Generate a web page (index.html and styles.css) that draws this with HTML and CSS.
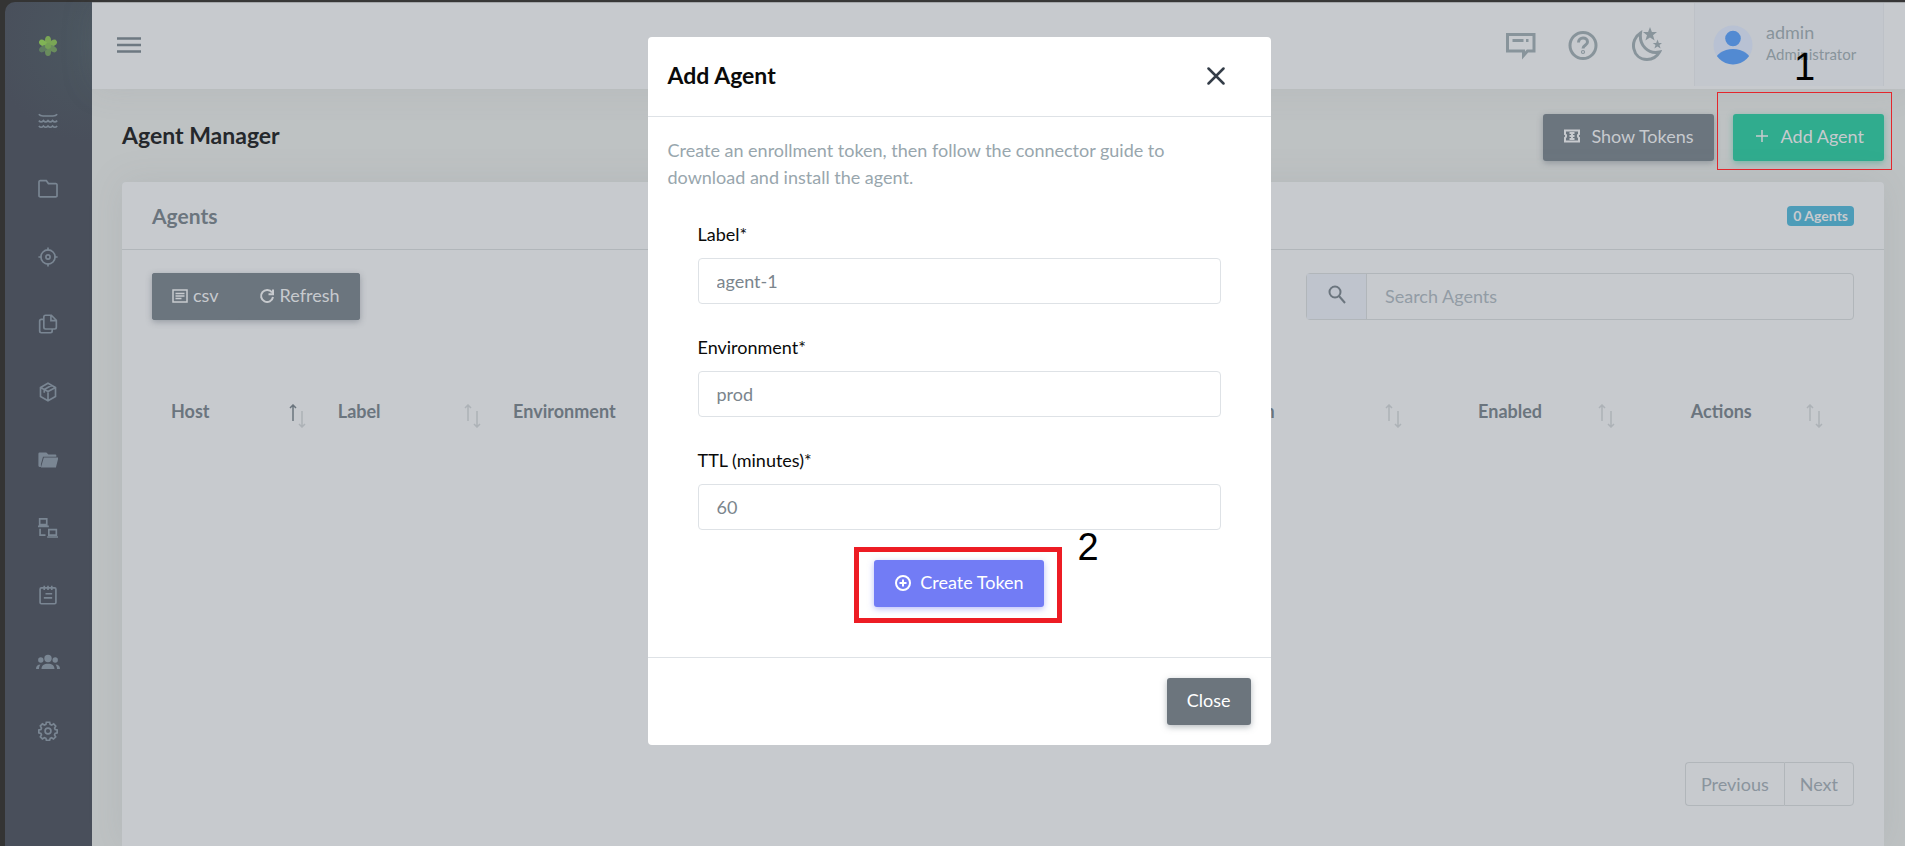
FILE: index.html
```html
<!DOCTYPE html>
<html lang="en">
<head>
<meta charset="utf-8">
<title>Agent Manager</title>
<link rel="stylesheet" href="styles.css">
</head>
<body>
<div class="app">
  <aside class="sidebar">
    <a class="logo" href="#" aria-label="Home">
      <svg width="20" height="20" viewBox="0 0 20 20"><g fill="#7aa655"><ellipse cx="10" cy="4.500" rx="3" ry="4.500"/><ellipse cx="10" cy="4.500" rx="3" ry="4.500" transform="rotate(60 10 10)"/><ellipse cx="10" cy="4.500" rx="3" ry="4.500" transform="rotate(-60 10 10)" fill="#80b455"/></g><g fill="#6a8d5d"><ellipse cx="10" cy="4.500" rx="3" ry="4.500" transform="rotate(120 10 10)"/><ellipse cx="10" cy="4.500" rx="3" ry="4.500" transform="rotate(180 10 10)"/><ellipse cx="10" cy="4.500" rx="3" ry="4.500" transform="rotate(240 10 10)" fill="#5f7c61"/></g><circle cx="10" cy="10" r="3" fill="#74a057"/></svg>
    </a>
    <nav class="side-nav">
      <a href="#" aria-label="Streams"><svg viewBox="0 0 24 24" class="line"><path d="M1 4c1.500 2 3 2 5 2h12c2 0 3.500 0 5-2M1 11.500c1.800 2 3.700 2 5.500 0 1.800 2 3.700 2 5.500 0 1.800 2 3.700 2 5.500 0 1.800 2 3.700 2 5.500 0M1 18c1.800 2 3.700 2 5.500 0 1.800 2 3.700 2 5.500 0 1.800 2 3.700 2 5.500 0 1.800 2 3.700 2 5.500 0"/></svg></a>
      <a href="#" aria-label="Folders"><svg viewBox="0 0 24 24" class="line"><path d="M3 2h7l2.500 3.500H21A1.500 1.500 0 0 1 22.800 7v13a1.500 1.500 0 0 1-1.800 1.500H3A1.500 1.500 0 0 1 1.200 20V3.500A1.500 1.500 0 0 1 3 2z"/></svg></a>
      <a href="#" aria-label="Targets"><svg viewBox="0 0 24 24" class="line"><circle cx="12" cy="12" r="8.500"/><circle cx="12" cy="12" r="2.500"/><path d="M12 .5v4M12 19.500v4M.5 12h4M19.500 12h4"/></svg></a>
      <a href="#" aria-label="Documents"><svg viewBox="0 0 24 24" class="line"><path d="M9 1.500h7l6 6V16a2 2 0 0 1-2 2H9a2 2 0 0 1-2-2V3.500a2 2 0 0 1 2-2zM15.500 2v6H22M7 6.500H4a2 2 0 0 0-2 2v12a2 2 0 0 0 2 2h11a2 2 0 0 0 2-2V18"/></svg></a>
      <a href="#" aria-label="Packages"><svg viewBox="0 0 24 24" class="line"><path d="M12 1.500l9 5v11l-9 5-9-5v-11zM3 6.500l9 5 9-5M12 11.500v11M7.500 9V13M7.500 9l9-5"/></svg></a>
      <a href="#" aria-label="Files"><svg viewBox="0 0 24 24" class="solid"><path d="M2 3h8l2.500 2.500H21a1 1 0 0 1 1 1V8H6L3.500 17V20.500H1.800A1.500 1.500 0 0 1 .5 19V4.500A1.500 1.500 0 0 1 2 3zM7 9h17.500l-3 12H3.500z"/></svg></a>
      <a href="#" aria-label="Agents"><svg viewBox="0 0 24 24" class="line"><path d="M2 1h8.500v7H2zM0 10h13M13 14h9v6.500h-9zM11 22.800h13M2.500 13v7.500H9"/></svg></a>
      <a href="#" aria-label="Tasks"><svg viewBox="0 0 24 24" class="line"><path d="M4 3.500h16a1.500 1.500 0 0 1 1.500 1.500v16a1.500 1.500 0 0 1-1.500 1.500H4A1.500 1.500 0 0 1 2.500 21V5A1.500 1.500 0 0 1 4 3.500zM7.500 1v5M12 1v5M16.500 1v5M9 10.500h8M7 15.500h10"/></svg></a>
      <a href="#" aria-label="Users"><svg viewBox="0 0 24 24" class="solid wide"><circle cx="12" cy="7.500" r="3.700"/><circle cx="4.800" cy="9" r="2.700"/><circle cx="19.200" cy="9" r="2.700"/><path d="M5.500 18c0-3.500 2.500-5.200 6.500-5.200s6.500 1.700 6.500 5.200zM0 18c0-2.800 1.500-4.500 4.500-4.500-1 1.300-1.500 2.700-1.500 4.500zM24 18c0-2.800-1.500-4.500-4.500-4.500 1 1.300 1.500 2.700 1.500 4.500z"/></svg></a>
      <a href="#" aria-label="Settings"><svg viewBox="0 0 24 24" class="line"><circle cx="12" cy="12" r="3.500"/><path d="M10 1.500h4l.6 2.700 1.800.8 2.400-1.500 2.500 2.600-1.400 2.400.7 1.700 2.400.6v3.400l-2.500.7-.7 1.800 1.400 2.300-2.600 2.600-2.300-1.500-1.700.8-.7 2.400h-3.800l-.6-2.500-1.800-.7-2.400 1.400-2.500-2.500 1.400-2.400-.7-1.700-2.500-.7v-3.400l2.500-.6.7-1.800-1.400-2.400 2.500-2.500 2.400 1.400 1.800-.7z"/></svg></a>
    </nav>
  </aside>

  <div class="page">
    <header class="topbar">
      <button class="icon-btn" aria-label="Toggle menu"><svg width="24" height="16" viewBox="0 0 24 16"><path d="M0 1.500h24M0 8h24M0 14.500h24" stroke="#6d7881" stroke-width="2.500"/></svg></button>
      <div class="top-actions">
        <button class="icon-btn" aria-label="Messages"><svg width="30" height="30" viewBox="0 0 30 30" class="tool"><path d="M1.500 4.500h26.500v16.500H21.500L17.500 25.500v-4.500h-16z"/><path d="M6.500 10.500h11M20 10.500h2.500"/></svg></button>
        <button class="icon-btn" aria-label="Help"><svg width="30" height="30" viewBox="0 0 30 30" class="tool"><circle cx="15" cy="15.500" r="13"/><path d="M10.500 12.500c0-6 9-6 9-.5 0 3.500-4.500 3-4.500 6.500"/><circle cx="15" cy="22" r=".6"/></svg></button>
        <button class="icon-btn" aria-label="Dark mode"><svg width="32" height="36" viewBox="0 0 32 36" class="tool"><path d="M10.500 6C-1 13 2 32 17 32.500c6 0 10-3 12.500-7.500C18 27.500 9 18 10.500 6z"/><path class="star" d="M20 0l1.900 5h5.100L23 8.300l1.600 5.200L20 10.500l-4.600 3 1.600-5.200-4-3.300h5.100zM27.500 12.500l1.300 3.400h3.200l-2.500 2.200 1.100 3.400-3.100-2-3.100 2 1.100-3.400-2.800-2.200h3.500z"/></svg></button>
        <a class="user" href="#">
          <svg width="40" height="40" viewBox="0 0 40 40"><defs><clipPath id="av"><circle cx="20" cy="20" r="19.500"/></clipPath></defs><circle cx="20" cy="20" r="19.500" fill="#b8c1d3"/><g clip-path="url(#av)" fill="#528ad2"><circle cx="20" cy="13.500" r="7.800"/><ellipse cx="20" cy="37" rx="18" ry="13"/></g></svg>
          <span class="user-text"><span class="user-name">admin</span><span class="user-role">Administrator</span></span>
        </a>
      </div>
    </header>

    <main class="content">
      <div class="page-head">
        <h1>Agent Manager</h1>
        <div class="head-buttons">
          <button class="btn grey"><svg width="18" height="18" viewBox="0 0 18 18" class="glyph"><path d="M2 3.500h14v3.700a2 2 0 0 0 0 3.600v3.700H2v-3.700a2 2 0 0 0 0-3.600z"/><path d="M6.500 6h5M6.500 9h5M6.500 12h5M9 5v8"/></svg>Show Tokens</button>
          <button class="btn green"><svg width="18" height="18" viewBox="0 0 18 18" class="glyph thin"><path d="M9 3v12M3 9h12"/></svg>Add Agent</button>
        </div>
      </div>

      <section class="card">
        <div class="card-head"><h2>Agents</h2><span class="badge">0 Agents</span></div>
        <div class="card-body">
          <div class="tools">
            <div class="btn-group">
              <button class="btn grey"><svg width="16" height="16" viewBox="0 0 16 16" class="glyph thin"><path d="M1 2h14v12H1zM3.500 5.500h9M3.500 8h9M3.500 10.500h6"/></svg>csv</button>
              <button class="btn grey"><svg width="16" height="16" viewBox="0 0 16 16" class="glyph"><path d="M13 4.500A6 6 0 1 0 14 9M14 1.500v4.700H9.500"/></svg>Refresh</button>
            </div>
            <div class="search">
              <label for="search" aria-label="Search"><svg width="18" height="20" viewBox="0 0 18 20"><circle cx="7" cy="7" r="5.500"/><path d="M11 11l6 7"/></svg></label>
              <input id="search" type="search" placeholder="Search Agents">
            </div>
          </div>
          <table>
            <colgroup><col class="c1"><col class="c2"><col class="c3"><col class="c4"><col class="c5"><col class="c6"></colgroup>
            <thead><tr>
              <th><span class="th">Host<svg class="sort asc" width="18" height="24" viewBox="0 0 18 24"><path d="M4 17V1M1 4l3-3 3 3"/><path d="M13 7v16M10 20l3 3 3-3"/></svg></span></th>
              <th><span class="th">Label<svg class="sort" width="18" height="24" viewBox="0 0 18 24"><path d="M4 17V1M1 4l3-3 3 3"/><path d="M13 7v16M10 20l3 3 3-3"/></svg></span></th>
              <th><span class="th">Environment</span></th>
              <th class="roomy"><span class="th">Version<svg class="sort" width="18" height="24" viewBox="0 0 18 24"><path d="M4 17V1M1 4l3-3 3 3"/><path d="M13 7v16M10 20l3 3 3-3"/></svg></span></th>
              <th class="roomy"><span class="th">Enabled<svg class="sort" width="18" height="24" viewBox="0 0 18 24"><path d="M4 17V1M1 4l3-3 3 3"/><path d="M13 7v16M10 20l3 3 3-3"/></svg></span></th>
              <th class="last"><span class="th">Actions<svg class="sort" width="18" height="24" viewBox="0 0 18 24"><path d="M4 17V1M1 4l3-3 3 3"/><path d="M13 7v16M10 20l3 3 3-3"/></svg></span></th>
            </tr></thead>
          </table>
          <div class="pager"><button>Previous</button><button>Next</button></div>
        </div>
      </section>
    </main>
  </div>
</div>

<div class="mark mark-add"><span>1</span></div>

<div class="modal" role="dialog" aria-labelledby="dlg-title">
  <div class="modal-head">
    <h2 id="dlg-title">Add Agent</h2>
    <button class="icon-btn" aria-label="Close dialog"><svg width="18" height="18" viewBox="0 0 18 18"><path d="M1.500 1.500l15 15M16.500 1.500l-15 15" stroke="#343d48" stroke-width="2.500" stroke-linecap="round"/></svg></button>
  </div>
  <div class="modal-body">
    <p>Create an enrollment token, then follow the connector guide to download and install the agent.</p>
    <form class="form">
      <div class="field"><label for="f-label">Label*</label><input id="f-label" type="text" placeholder="agent-1"></div>
      <div class="field"><label for="f-env">Environment*</label><input id="f-env" type="text" placeholder="prod"></div>
      <div class="field"><label for="f-ttl">TTL (minutes)*</label><input id="f-ttl" type="text" placeholder="60"></div>
      <div class="submit">
        <button class="btn violet" type="button"><svg width="18" height="18" viewBox="0 0 18 18" class="glyph"><circle cx="9" cy="9" r="7"/><path d="M9 5.500v7M5.500 9h7"/></svg>Create Token</button>
        <div class="mark mark-create"><span>2</span></div>
      </div>
    </form>
  </div>
  <div class="modal-foot"><button class="btn slate">Close</button></div>
</div>
</body>
</html>
```

FILE: styles.css
```css
* { box-sizing: border-box; }
body {
  margin: 0;
  height: 100vh;
  overflow: hidden;
  background: #343434;
  font-family: Lato, "Open Sans", sans-serif;
  font-size: 18px;
  line-height: 27px;
  color: #6b757e;
}
button, input { font: inherit; color: inherit; }
button { border: 0; background: none; padding: 0; }
h1, h2, p { margin: 0; }
svg { display: block; fill: none; flex: none; }
a { color: inherit; text-decoration: none; }

.app {
  display: flex;
  height: 100vh;
  padding: 2px 0 0 5px;
}
.sidebar {
  width: 87px;
  padding-right: 1px;
  background: radial-gradient(circle at 100% 40px, #4b5760, #494f5b 100px);
  border-top-left-radius: 10px;
  display: flex;
  flex-direction: column;
  align-items: center;
}
.logo { padding-top: 34px; height: 109px; }
.side-nav {
  display: flex;
  flex-direction: column;
  justify-content: space-between;
  align-items: center;
  height: 630px;
}
.side-nav svg { width: 20px; height: 20px; }
.side-nav .wide { width: 24px; height: 24px; margin: -2px 0; }
.line { stroke: #7a8693; stroke-width: 2; }
.solid { fill: #7a8693; }

.page {
  flex: 1;
  display: flex;
  flex-direction: column;
  background: #bec2c3;
}
.topbar {
  height: 87px;
  background: #c7cace;
  display: flex;
  justify-content: space-between;
  padding: 0 21px 3px 25px;
  box-shadow: 0 0 35px rgba(120, 125, 135, .12);
  border-top: 1px solid #a5a8ab;
}
.top-actions { display: flex; align-items: center; gap: 32px; }
.tool { stroke: #88949b; stroke-width: 3; }
.star { fill: #88949b; stroke: none; }
.user {
  display: flex;
  gap: 13px;
  align-items: center;
  height: 100%;
  width: 190px;
  padding-left: 18px;
  background: #c3c7cd;
  border: 1px solid #bdc1c7;
  border-top: 0;
  border-bottom: 0;
}
.user-text { display: flex; flex-direction: column; line-height: 22px; padding-bottom: 4px; color: #88949b; }
.user-role { font-size: 15px; }

.content { padding: 0 21px 0 30px; flex: 1; display: flex; flex-direction: column; }
.page-head {
  display: flex;
  justify-content: space-between;
  align-items: center;
  height: 93px;
}
h1 { font-size: 23px; font-weight: 700; color: #25282c; }
.head-buttons { display: flex; gap: 19px; padding-top: 3px; }
.btn {
  display: flex;
  align-items: center;
  justify-content: center;
  gap: 8px;
  height: 47px;
  padding: 0 20px;
  border-radius: 3px;
  color: #c7cace;
}
.head-buttons .btn { gap: 10px; padding-bottom: 2px; }
.glyph { stroke: currentColor; stroke-width: 2; }
.thin { stroke-width: 1.500; }
.grey { background: #6b757e; box-shadow: 0 2px 6px rgba(90, 100, 110, .45); }
.green { background: #30ac8e; box-shadow: 0 2px 6px rgba(48, 172, 142, .5); }
.violet { background: #727cf5; color: #fff; box-shadow: 0 2px 6px rgba(114, 124, 245, .5); }
.slate { background: #6c757d; color: #fff; box-shadow: 0 2px 6px rgba(108, 117, 125, .5); }

.card {
  flex: 1;
  background: #c7cace;
  border-radius: 4px 4px 0 0;
  box-shadow: 0 0 35px rgba(120, 125, 135, .15);
}
.card-head {
  display: flex;
  justify-content: space-between;
  align-items: center;
  height: 68px;
  padding: 0 30px;
  border-bottom: 1px solid #b1b6ba;
}
.card-head h2 { font-size: 21px; font-weight: 700; }
.badge {
  background: #4d9cb8;
  color: #c7cace;
  border-radius: 4px;
  font-size: 14px;
  font-weight: 700;
  line-height: 20px;
  padding: 0 6px;
}
.card-body { padding: 23px 30px 0; }
.tools { display: flex; justify-content: space-between; }
.btn-group { display: flex; background: #6b757e; border-radius: 3px; box-shadow: 0 2px 6px rgba(90, 100, 110, .45); }
.btn-group .btn { box-shadow: none; gap: 5px; padding-bottom: 2px; }
.search {
  display: flex;
  width: 548px;
  height: 47px;
  border: 1px solid #b1b6ba;
  border-radius: 4px;
}
.search label {
  width: 60px;
  padding-bottom: 4px;
  display: grid;
  place-items: center;
  background: #bfc4cd;
  border-right: 1px solid #b1b6ba;
}
.search svg { stroke: #6b757e; stroke-width: 2; }
.search input { flex: 1; min-width: 0; border: 0; background: none; padding: 0 18px; }
.search input::placeholder { color: #929ca5; opacity: 1; }

table { width: 100%; margin-top: 66px; border-collapse: collapse; table-layout: fixed; }
.c1 { width: 9.8%; }
.c2 { width: 10.3%; }
.c3 { width: 41.2%; }
.c4 { width: 15.5%; }
.c5 { width: 12.5%; }
.c6 { width: 10.7%; }
th { padding: 12px 12px 12px 19px; text-align: left; vertical-align: top; font-weight: 700; }
th.roomy { padding-right: 56px; }
th.last { padding-right: 30px; }
.th { display: flex; justify-content: space-between; }
.sort { margin-top: 6px; stroke: #adb2b7; stroke-width: 1.500; }
.asc path:first-child { stroke: #6b757e; }

.pager { display: flex; justify-content: flex-end; margin-top: 322px; }
.pager button { height: 44px; padding: 0 15px; border: 1px solid #b1b6ba; color: #8a949d; }
.pager button:first-child { border-radius: 4px 0 0 4px; border-right: 0; }
.pager button:last-child { border-radius: 0 4px 4px 0; }

.modal {
  position: absolute;
  top: 37px;
  left: 50%;
  width: 623px;
  margin-left: -305px;
  background: #fff;
  border-radius: 4px;
}
.modal-head {
  display: flex;
  justify-content: space-between;
  align-items: center;
  height: 80px;
  padding: 0 46px 2px 20px;
  border-bottom: 1px solid #dee2e6;
}
.modal-head h2 { font-size: 23px; font-weight: 700; color: #0a0a0a; }
.modal-body { padding: 20px 20px 50px; color: #98a6ad; }
.modal-body p { padding-right: 50px; }
.form { padding: 30px 30px 0; }
.field { margin-bottom: 30px; }
.field label { display: block; color: #0a0a0a; margin-bottom: 10px; }
.field input {
  display: block;
  width: 100%;
  height: 46px;
  padding: 0 18px;
  border: 1px solid #dee2e6;
  border-radius: 4px;
  background: #fff;
}
.field input::placeholder { color: #7b858d; opacity: 1; }
.submit { position: relative; display: flex; justify-content: center; }
.submit .btn, .modal-foot .btn { padding-bottom: 2px; }
.modal-foot {
  display: flex;
  justify-content: flex-end;
  padding: 20px;
  border-top: 1px solid #dee2e6;
}

.mark { position: absolute; pointer-events: none; font: 38px/38px "Liberation Sans", Arial, sans-serif; color: #000; }
.mark span { position: absolute; }
.mark-add { top: 92px; right: 13px; width: 175px; height: 78px; border: 1px solid #e3262c; }
.mark-add span { left: 76px; top: -45px; }
.mark-create { top: -13px; left: 156px; width: 208px; height: 76px; border: 5px solid #ed1c24; }
.mark-create span { left: 219px; top: -24px; }
```
